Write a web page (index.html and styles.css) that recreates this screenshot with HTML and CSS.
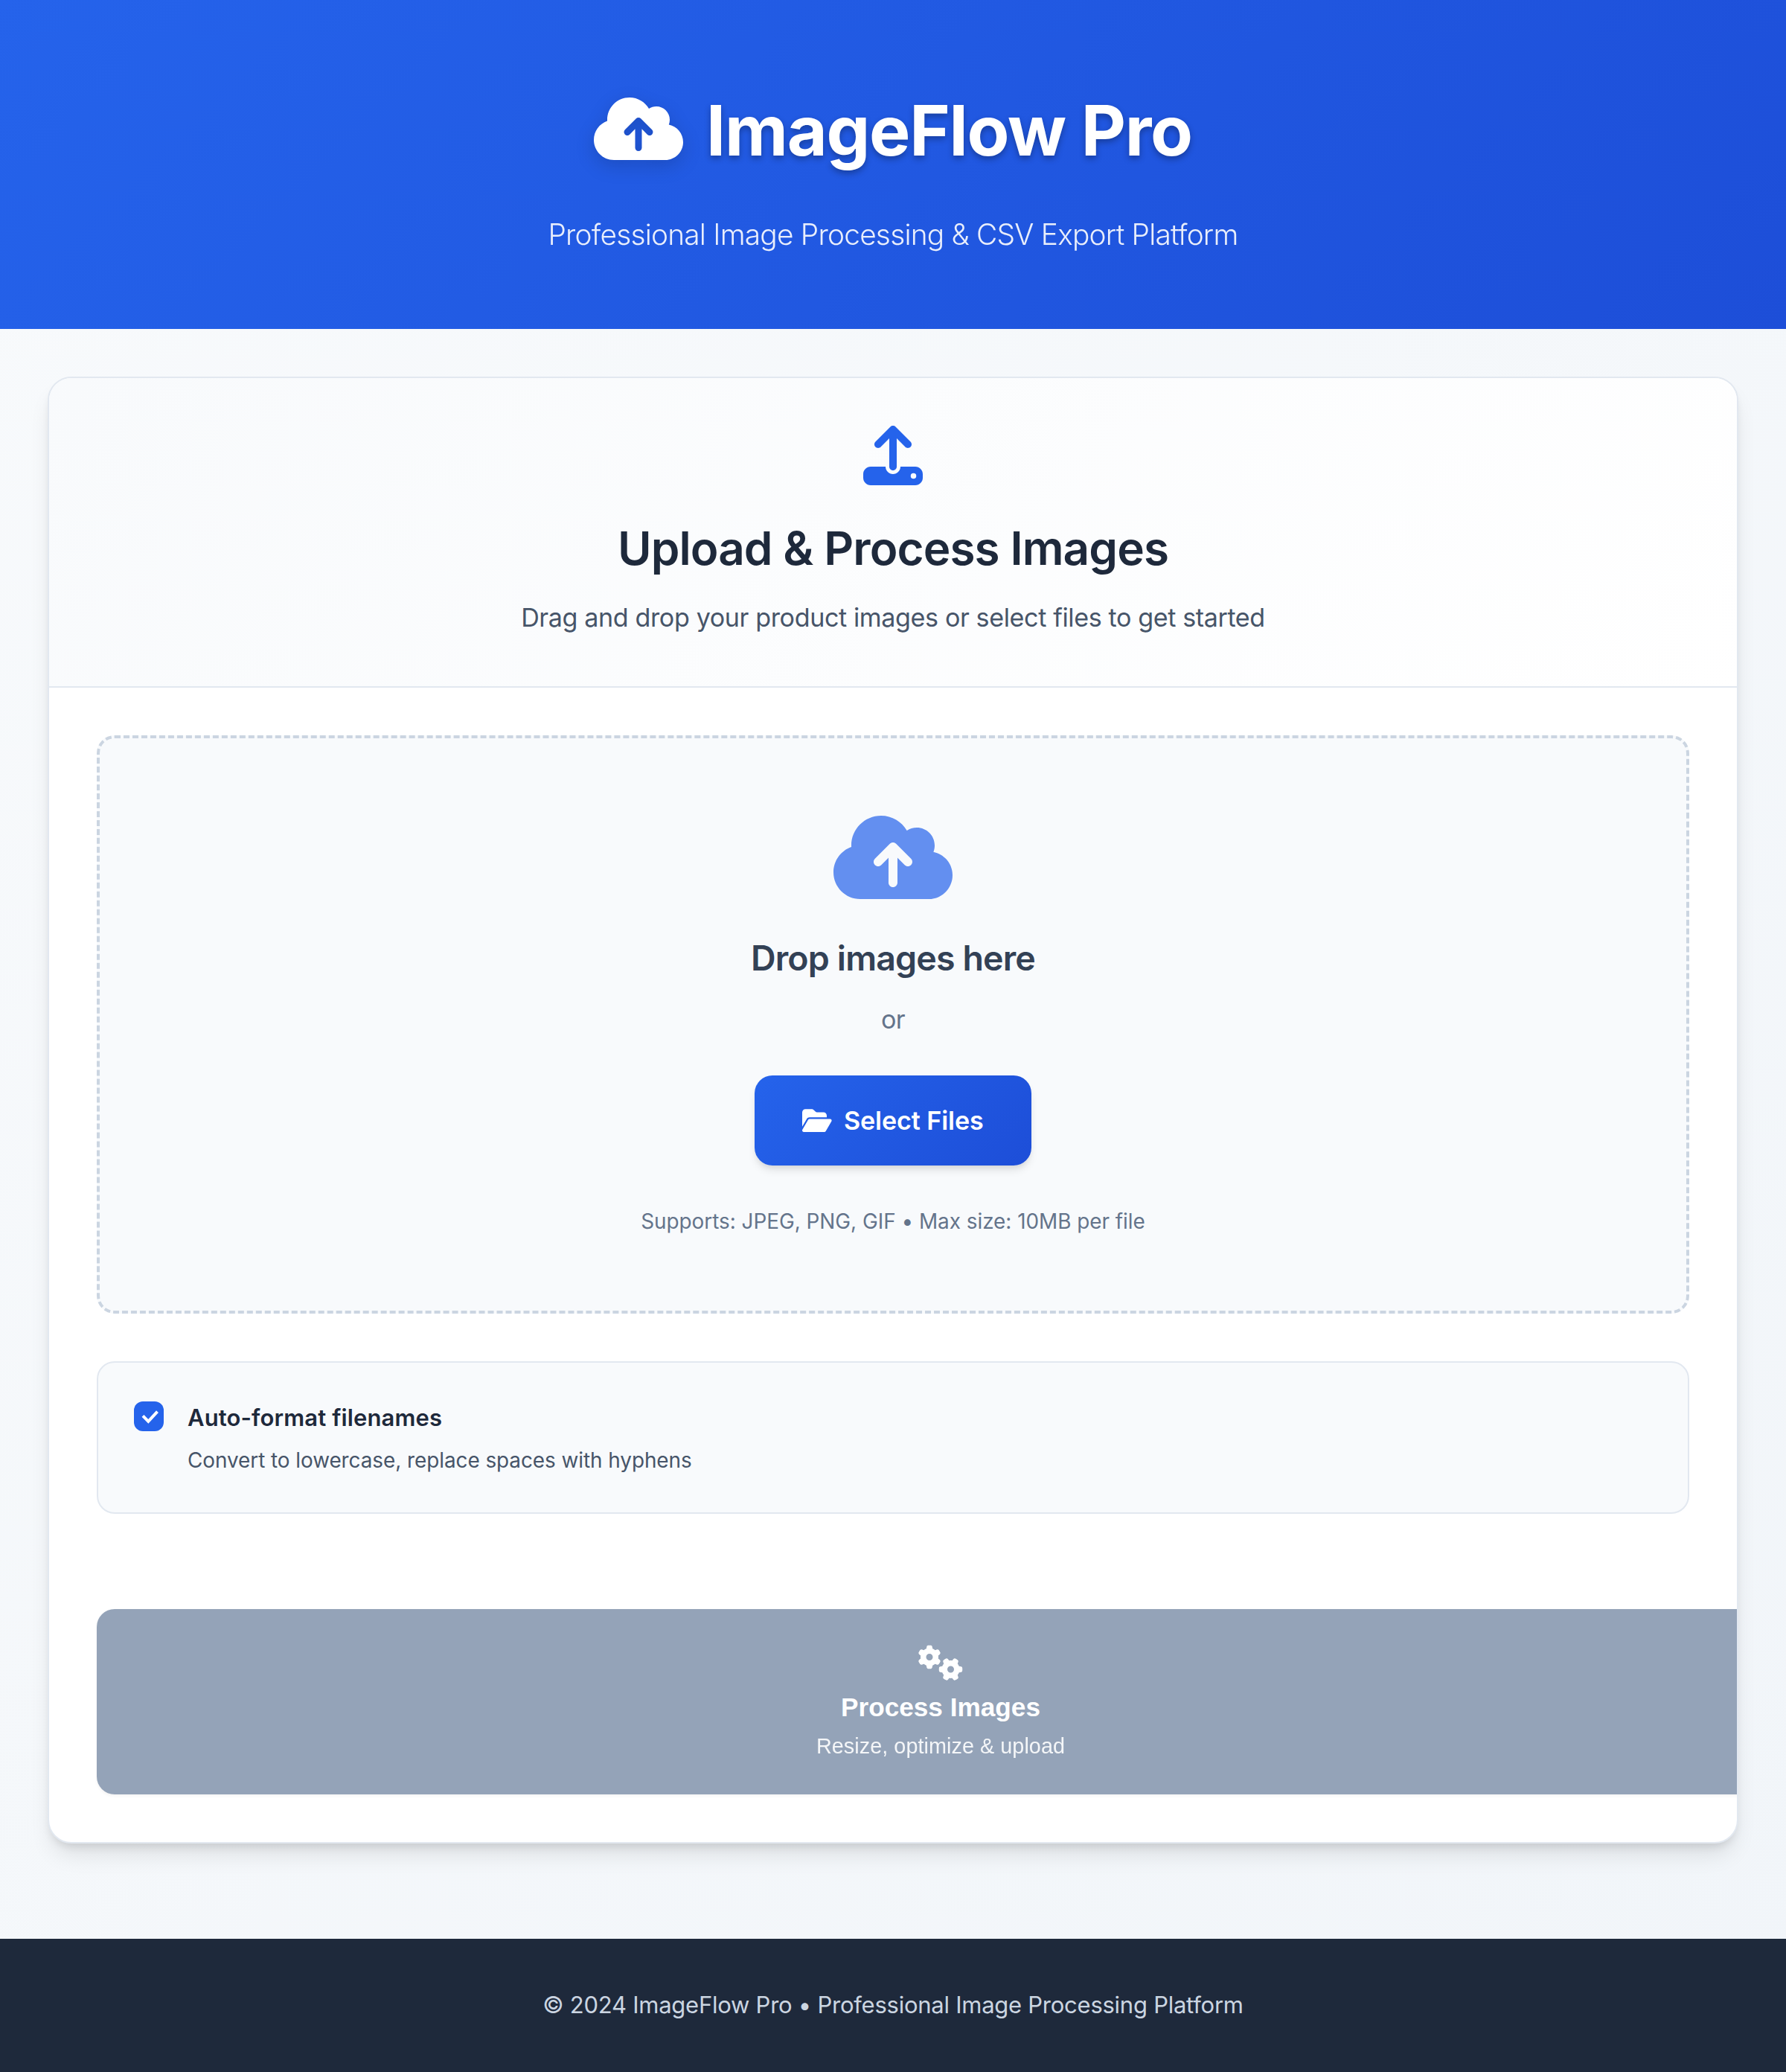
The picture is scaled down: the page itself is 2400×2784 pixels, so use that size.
FILE: index.html
```html
<!DOCTYPE html>
<html lang="en">
<head>
  <meta charset="utf-8">
  <title>ImageFlow Pro</title>
  <link rel="stylesheet" href="styles.css">
</head>
<body>
  <header class="header">
    <div class="brand">
      <svg class="brand-icon" viewBox="0 0 640 512"><path d="M144 480C64.5 480 0 415.5 0 336c0-62.8 40.2-116.2 96.2-135.9c-.1-2.7-.2-5.4-.2-8.1c0-88.4 71.6-160 160-160c59.3 0 111 32.2 138.7 80.2C409.9 102 428.3 96 448 96c53 0 96 43 96 96c0 12.2-2.3 23.8-6.4 34.6C596 238.4 640 290.1 640 352c0 70.7-57.3 128-128 128H144zm79-217c-9.4 9.4-9.4 24.6 0 33.9s24.6 9.4 33.9 0l39-39V392c0 13.3 10.7 24 24 24s24-10.7 24-24V257.9l39 39c9.4 9.4 24.6 9.4 33.9 0s9.4-24.6 0-33.9l-80-80c-9.4-9.4-24.6-9.4-33.9 0l-80 80z"/></svg>
      <h1 class="brand-name">ImageFlow Pro</h1>
    </div>
    <p class="tagline">Professional Image Processing &amp; CSV Export Platform</p>
  </header>

  <main class="card">
    <section class="card-header">
      <svg class="card-icon" viewBox="0 0 512 512"><path d="M288 109.3V352c0 17.7-14.3 32-32 32s-32-14.3-32-32V109.3l-73.4 73.4c-12.5 12.5-32.8 12.5-45.3 0s-12.5-32.8 0-45.3l128-128c12.5-12.5 32.8-12.5 45.3 0l128 128c12.5 12.5 12.5 32.8 0 45.3s-32.8 12.5-45.3 0L288 109.3zM64 352H192c0 35.3 28.7 64 64 64s64-28.7 64-64H448c35.3 0 64 28.7 64 64v32c0 35.3-28.7 64-64 64H64c-35.3 0-64-28.7-64-64V416c0-35.3 28.7-64 64-64zM432 456a24 24 0 1 0 0-48 24 24 0 1 0 0 48z"/></svg>
      <h2 class="card-title">Upload &amp; Process Images</h2>
      <p class="card-text">Drag and drop your product images or select files to get started</p>
    </section>

    <div class="card-body">
      <div class="dropzone">
        <svg class="drop-icon" viewBox="0 32 640 448"><path d="M144 480C64.5 480 0 415.5 0 336c0-62.8 40.2-116.2 96.2-135.9c-.1-2.7-.2-5.4-.2-8.1c0-88.4 71.6-160 160-160c59.3 0 111 32.2 138.7 80.2C409.9 102 428.3 96 448 96c53 0 96 43 96 96c0 12.2-2.3 23.8-6.4 34.6C596 238.4 640 290.1 640 352c0 70.7-57.3 128-128 128H144zm79-217c-9.4 9.4-9.4 24.6 0 33.9s24.6 9.4 33.9 0l39-39V392c0 13.3 10.7 24 24 24s24-10.7 24-24V257.9l39 39c9.4 9.4 24.6 9.4 33.9 0s9.4-24.6 0-33.9l-80-80c-9.4-9.4-24.6-9.4-33.9 0l-80 80z"/></svg>
        <h3 class="drop-title">Drop images here</h3>
        <p class="drop-or">or</p>
        <button class="select-btn" type="button">
          <svg class="folder-icon" viewBox="0 0 576 512"><path d="M88.7 223.8L0 375.8V96C0 60.7 28.7 32 64 32H181.5c17 0 33.3 6.7 45.3 18.7l26.5 26.5c12 12 28.3 18.7 45.3 18.7H416c35.3 0 64 28.7 64 64v32H144c-22.8 0-43.8 12.1-55.3 31.8zm27.6 16.1C122.1 230 132.6 224 144 224H544c11.5 0 22 6.1 27.7 16.1s5.7 22.2-.1 32.1l-112 192C453.9 474 443.4 480 432 480H32c-11.5 0-22-6.1-27.7-16.1s-5.7-22.2 .1-32.1l112-192z"/></svg>
          <span>Select Files</span>
        </button>
        <p class="drop-hint">Supports: JPEG, PNG, GIF • Max size: 10MB per file</p>
      </div>

      <label class="option">
        <svg class="checkbox" viewBox="0 0 40 40"><rect class="checkbox-box" width="40" height="40" rx="12"/><path class="checkbox-tick" d="M12 19.3L19.3 26.9L31.5 13.6"/></svg>
        <span class="option-copy">
          <span class="option-title">Auto-format filenames</span>
          <span class="option-text">Convert to lowercase, replace spaces with hyphens</span>
        </span>
      </label>

      <button class="process-btn" type="button">
        <svg class="gears-icon" viewBox="0 0 640 512"><path d="M308.5 135.3c7.1-6.3 9.9-16.2 6.2-25c-2.3-5.3-4.8-10.5-7.6-15.5L304 89.4c-3-5-6.3-9.9-9.8-14.6c-5.7-7.6-15.7-10.1-24.7-7.1l-28.2 9.3c-10.7-8.8-23-16-36.2-20.9L199 27.1c-1.9-9.3-9.1-16.7-18.5-17.8C173.9 8.4 167.2 8 160.4 8h-.7c-6.8 0-13.5 .4-20.1 1.2c-9.4 1.1-16.6 8.6-18.5 17.8L115 56.1c-13.3 5-25.5 12.1-36.2 20.9L50.5 67.8c-9-3-19-.5-24.7 7.1c-3.5 4.7-6.8 9.6-9.9 14.6l-3 5.3c-2.8 5-5.3 10.2-7.6 15.6c-3.7 8.7-.9 18.6 6.2 25l22.2 19.8C32.6 161.9 32 168.9 32 176s.6 14.1 1.7 20.9L11.5 216.7c-7.1 6.3-9.9 16.2-6.2 25c2.3 5.3 4.8 10.5 7.6 15.6l3 5.2c3 5.1 6.3 9.9 9.9 14.6c5.7 7.6 15.7 10.1 24.7 7.1l28.2-9.3c10.7 8.8 23 16 36.2 20.9l6.1 29.1c1.9 9.3 9.1 16.7 18.5 17.8c6.7 .8 13.5 1.2 20.4 1.2s13.7-.4 20.4-1.2c9.4-1.1 16.6-8.6 18.5-17.8l6.1-29.1c13.3-5 25.5-12.1 36.2-20.9l28.2 9.3c9 3 19 .5 24.7-7.1c3.5-4.7 6.8-9.5 9.8-14.6l3.1-5.4c2.8-5 5.3-10.2 7.6-15.5c3.7-8.7 .9-18.6-6.2-25l-22.2-19.8c1.1-6.8 1.7-13.8 1.7-20.9s-.6-14.1-1.7-20.9l22.2-19.8zM112 176a48 48 0 1 1 96 0 48 48 0 1 1 -96 0zM504.7 500.5c6.3 7.1 16.2 9.9 25 6.2c5.3-2.3 10.5-4.8 15.5-7.6l5.4-3.1c5-3 9.9-6.3 14.6-9.8c7.6-5.7 10.1-15.7 7.1-24.7l-9.3-28.2c8.8-10.7 16-23 20.9-36.2l29.1-6.1c9.3-1.9 16.7-9.1 17.8-18.5c.8-6.7 1.2-13.5 1.2-20.4s-.4-13.7-1.2-20.4c-1.1-9.4-8.6-16.6-17.8-18.5L583.9 307c-5-13.3-12.1-25.5-20.9-36.2l9.3-28.2c3-9 .5-19-7.1-24.7c-4.7-3.5-9.6-6.8-14.6-9.9l-5.3-3c-5-2.8-10.2-5.3-15.6-7.6c-8.7-3.7-18.6-.9-25 6.2l-19.8 22.2c-6.8-1.1-13.8-1.7-20.9-1.7s-14.1 .6-20.9 1.7l-19.8-22.2c-6.3-7.1-16.2-9.9-25-6.2c-5.3 2.3-10.5 4.8-15.6 7.6l-5.2 3c-5.1 3-9.9 6.3-14.6 9.9c-7.6 5.7-10.1 15.7-7.1 24.7l9.3 28.2c-8.8 10.7-16 23-20.9 36.2L315.1 313c-9.3 1.9-16.7 9.1-17.8 18.5c-.8 6.7-1.2 13.5-1.2 20.4s.4 13.7 1.2 20.4c1.1 9.4 8.6 16.6 17.8 18.5l29.1 6.1c5 13.3 12.1 25.5 20.9 36.2l-9.3 28.2c-3 9-.5 19 7.1 24.7c4.7 3.5 9.5 6.8 14.6 9.8l5.4 3.1c5 2.8 10.2 5.3 15.5 7.6c8.7 3.7 18.6 .9 25-6.2l19.8-22.2c6.8 1.1 13.8 1.7 20.9 1.7s14.1-.6 20.9-1.7l19.8 22.2zM464 304a48 48 0 1 1 0 96 48 48 0 1 1 0-96z"/></svg>
        <span class="process-title">Process Images</span>
        <span class="process-text">Resize, optimize &amp; upload</span>
      </button>
    </div>
  </main>

  <footer class="footer">© 2024 ImageFlow Pro • Professional Image Processing Platform</footer>
</body>
</html>
```
FILE: styles.css
```css
* {
  box-sizing: border-box;
  margin: 0;
  padding: 0;
}

body {
  min-height: 2784px;
  font-family: Inter, "Liberation Sans", sans-serif;
  color: #1e293b;
  white-space: nowrap;
  background: linear-gradient(135deg, #f8fafc 0%, #f1f5f9 100%);
}

svg {
  display: block;
  flex: none;
  fill: currentColor;
}

/* Page header */
.header {
  height: 442px;
  padding-top: 96px;
  color: #fff;
  text-align: center;
  background: linear-gradient(135deg, #2563eb 0%, #1d4ed8 100%);
}

.brand {
  display: flex;
  justify-content: center;
  align-items: flex-start;
  gap: 31px;
}

.brand-icon {
  width: 120px;
  height: 96px;
  margin-top: 29px;
  filter: drop-shadow(0 8px 12px rgba(0, 0, 0, 0.15));
}

.brand-name {
  padding-top: 2px;
  font-size: 93px;
  font-weight: 700;
  line-height: 154px;
  letter-spacing: -1.22px;
  text-shadow: 0 4px 8px rgba(0, 0, 0, 0.3);
}

.tagline {
  margin-top: 31px;
  font-size: 38.8px;
  font-weight: 300;
  line-height: 64px;
  letter-spacing: -0.762px;
  opacity: 0.9;
}

/* Upload card */
.card {
  margin: 64px 64px 128px;
  overflow: hidden;
  background: #fff;
  border: 2px solid #e2e8f0;
  border-radius: 32px;
  box-shadow: 0 20px 30px -6px rgba(0, 0, 0, 0.1), 0 8px 12px -4px rgba(0, 0, 0, 0.1);
}

.card-header {
  display: flex;
  flex-direction: column;
  align-items: center;
  height: 416px;
  padding-top: 64px;
  background: linear-gradient(135deg, #f8fafc 0%, #fff 100%);
  border-bottom: 2px solid #e2e8f0;
}

.card-icon {
  width: 80px;
  height: 80px;
  color: #2563eb;
}

.card-title {
  margin-top: 34px;
  font-size: 62px;
  font-weight: 600;
  line-height: 102px;
  letter-spacing: -0.911px;
}

.card-text {
  margin-top: 14px;
  font-size: 34.1px;
  line-height: 56px;
  letter-spacing: -0.378px;
  color: #475569;
}

.card-body {
  padding: 64px;
}

/* Drop area */
.dropzone {
  display: flex;
  flex-direction: column;
  align-items: center;
  height: 777px;
  padding-top: 104px;
  background: #f8fafc;
  border: 4px dashed #cbd5e1;
  border-radius: 24px;
}

.drop-icon {
  width: 160px;
  height: 112px;
  color: #2563eb;
  opacity: 0.7;
}

.drop-title {
  margin-top: 41px;
  font-size: 46.5px;
  font-weight: 600;
  line-height: 76px;
  letter-spacing: -0.85px;
  color: #334155;
}

.drop-or {
  margin-top: 17px;
  font-size: 34.1px;
  line-height: 56px;
  letter-spacing: -0.6px;
  color: #64748b;
}

.select-btn {
  display: flex;
  justify-content: center;
  align-items: center;
  gap: 16px;
  width: 372px;
  height: 121px;
  margin-top: 47px;
  font: 600 34.1px/56px Inter, "Liberation Sans", sans-serif;
  letter-spacing: -0.08px;
  color: #fff;
  background: linear-gradient(135deg, #2563eb 0%, #1d4ed8 100%);
  border: 0;
  border-radius: 24px;
  box-shadow: 0 8px 12px -2px rgba(0, 0, 0, 0.1), 0 4px 8px -4px rgba(0, 0, 0, 0.1);
}

.folder-icon {
  width: 39.6px;
  height: 35.2px;
}

.drop-hint {
  margin-top: 52px;
  font-size: 27.9px;
  line-height: 46px;
  letter-spacing: -0.028px;
  color: #64748b;
}

/* Filename option */
.option {
  display: flex;
  align-items: flex-start;
  gap: 32px;
  height: 205px;
  margin-top: 64px;
  padding: 48px;
  background: #f8fafc;
  border: 2px solid #e2e8f0;
  border-radius: 24px;
}

.checkbox {
  width: 40px;
  height: 40px;
  margin-top: 4px;
}

.checkbox-box {
  fill: #2563eb;
}

.checkbox-tick {
  fill: none;
  stroke: #fff;
  stroke-width: 4;
}

.option-copy {
  display: flex;
  flex-direction: column;
  gap: 8px;
}

.option-title {
  font-size: 31px;
  font-weight: 600;
  line-height: 52px;
  letter-spacing: 0.123px;
}

.option-text {
  font-size: 27.9px;
  line-height: 46px;
  letter-spacing: -0.055px;
  color: #475569;
}

/* Process action: wider than the body column, clipped by the card edge */
.process-btn {
  display: flex;
  flex-direction: column;
  align-items: center;
  width: 2268px;
  height: 249px;
  margin-top: 128px;
  padding-top: 48px;
  font-family: "Liberation Sans", Arial, sans-serif;
  color: #fff;
  background: #94a3b8;
  border: 0;
  border-radius: 24px;
  box-shadow: 0 2px 4px rgba(0, 0, 0, 0.05);
}

.gears-icon {
  width: 60px;
  height: 48px;
}

.process-title {
  margin-top: 15.5px;
  font-size: 35.2px;
  font-weight: 700;
  line-height: 40px;
}

.process-text {
  margin-top: 15.5px;
  font-size: 28.8px;
  line-height: 34px;
  letter-spacing: 0.045px;
  opacity: 0.9;
}

/* Page footer */
.footer {
  height: 179px;
  padding-top: 63px;
  font-size: 31px;
  line-height: 52px;
  letter-spacing: -0.253px;
  text-align: center;
  color: #cbd5e1;
  background: #1e293b;
}
```
